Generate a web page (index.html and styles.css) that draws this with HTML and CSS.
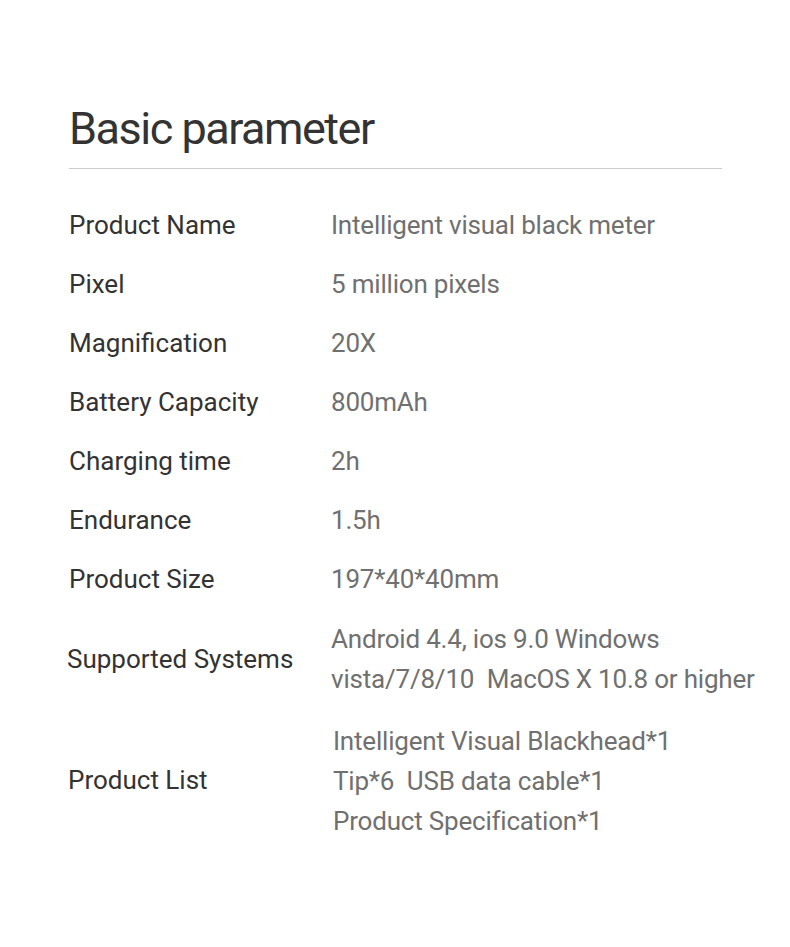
FILE: index.html
```html
<!DOCTYPE html>
<html>
<head>
<meta charset="utf-8">
<link rel="stylesheet" href="styles.css">
</head>
<body>
<main class="page">
  <h1 class="title">Basic parameter</h1>
  <div class="table">
    <div class="label">Product Name</div><div class="value">Intelligent visual black meter</div>
    <div class="label">Pixel</div><div class="value">5 million pixels</div>
    <div class="label">Magnification</div><div class="value">20X</div>
    <div class="label">Battery Capacity</div><div class="value">800mAh</div>
    <div class="label">Charging time</div><div class="value">2h</div>
    <div class="label">Endurance</div><div class="value">1.5h</div>
    <div class="label">Product Size</div><div class="value">197*40*40mm</div>
    <div class="label sys">Supported Systems</div><div class="value multi">Android 4.4, ios 9.0 Windows<br>vista/7/8/10&nbsp; MacOS X 10.8 or higher</div>
    <div class="label list">Product List</div><div class="value multi list-values">Intelligent Visual Blackhead*1<br>Tip*6&nbsp; USB data cable*1<br>Product Specification*1</div>
  </div>
</main>
</body>
</html>
```
FILE: styles.css
```css
html, body {
  margin: 0;
  padding: 0;
  background: #ffffff;
}
.page {
  font-family: Roboto, "Liberation Sans", sans-serif;
  width: 653px;
  padding: 102px 0 0 69px;
}
.title {
  margin: 0;
  font-weight: 400;
  font-size: 45px;
  line-height: 54px;
  color: #333333;
  padding-bottom: 12px;
  border-bottom: 1px solid #cccccc;
  letter-spacing: -1.5px;
}
.table {
  margin-top: 27px;
  display: grid;
  grid-template-columns: 262px 1fr;
  font-size: 26px;
  line-height: 59px;
}
.label {
  color: #333333;
  display: flex;
  align-items: center;
}
.value {
  color: #707070;
  white-space: nowrap;
  letter-spacing: -0.2px;
}
.multi {
  line-height: 40px;
  padding: 10px 0;
}
.list-values {
  padding: 12px 0 10px 2px;
}
.sys {
  margin-left: -2px;
}
.list {
  margin-left: -1px;
}
```
